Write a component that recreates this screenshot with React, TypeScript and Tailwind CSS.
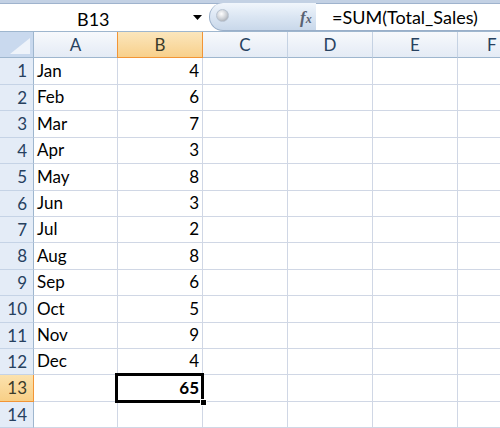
import React from "react";

const months = [
  ["Jan", 4],
  ["Feb", 6],
  ["Mar", 7],
  ["Apr", 3],
  ["May", 8],
  ["Jun", 3],
  ["Jul", 2],
  ["Aug", 8],
  ["Sep", 6],
  ["Oct", 5],
  ["Nov", 9],
  ["Dec", 4],
] as const;

const heights = [
  "h-[27px]",
  "h-[26px]",
  "h-[27px]",
  "h-[26px]",
  "h-[27px]",
  "h-[26px]",
  "h-[26px]",
  "h-[27px]",
  "h-[26px]",
  "h-[27px]",
  "h-[26px]",
  "h-[26px]",
];

const font = { fontFamily: "Lato, 'Open Sans', sans-serif" };

function RowHeader({ n, selected }: { n: number; selected?: boolean }) {
  return (
    <div
      className={
        "w-[34px] shrink-0 h-full flex items-center justify-end pr-[6px] border-r border-b text-[17px] " +
        (selected
          ? "bg-gradient-to-b from-[#fbe2ae] to-[#f8cf86] border-[#f29536] text-[#3b3b2a]"
          : "bg-[#e4ecf7] border-r-[#9eb6ce] border-b-[#c5d3e6] text-[#27415f]")
      }
    >
      {n}
    </div>
  );
}

function Blank() {
  return (
    <>
      <div className="w-[85px] shrink-0 h-full border-r border-b border-[#d0d7e5]" />
      <div className="w-[85px] shrink-0 h-full border-r border-b border-[#d0d7e5]" />
      <div className="w-[85px] shrink-0 h-full border-r border-b border-[#d0d7e5]" />
      <div className="flex-1 h-full border-b border-[#d0d7e5]" />
    </>
  );
}

export default function App() {
  return (
    <div
      className="w-[500px] h-[428px] overflow-hidden bg-white text-black flex flex-col"
      style={font}
    >
      {/* top strip */}
      <div className="h-[4px] shrink-0 bg-[#c3d1e4] border-b border-[#9fb3cd]" />
      {/* formula bar row */}
      <div className="h-[27px] shrink-0 flex items-stretch bg-white">
        <div className="w-[209px] shrink-0 flex items-center relative">
          <span className="absolute left-[77px] top-[2px] text-[18px] text-black">B13</span>
          <svg
            className="absolute left-[193px] top-[11px]"
            width="9"
            height="5"
            viewBox="0 0 9 5"
          >
            <polygon points="0,0 9,0 4.5,5" fill="#000" />
          </svg>
        </div>
        <div className="w-[107px] shrink-0 flex items-center relative rounded-l-full border-l border-b border-[#9aafc9] bg-gradient-to-b from-[#f1f6fc] via-[#dbe6f3] to-[#c9d8ea] -mt-[1px]">
          <div className="absolute left-[6px] top-[6px] w-[13px] h-[13px] rounded-full bg-[radial-gradient(circle_at_40%_35%,#ffffff,#c9cdd3_55%,#8e949c)] border border-[#b8c3d1]" />
          <span
            className="absolute left-[90px] top-[2px] text-[17px] text-[#596273] italic font-bold"
            style={{ fontFamily: "'Liberation Serif', serif" }}
          >
            f
            <span className="text-[12px]">x</span>
          </span>
        </div>
        <div className="flex-1 flex items-center pl-[16px] text-[18px] border-b border-[#9aafc9] bg-white">
          =SUM(Total_Sales)
        </div>
      </div>
      {/* column headers */}
      <div className="h-[27px] shrink-0 flex border-t border-[#9eb6ce]">
        <div className="w-[34px] shrink-0 h-full relative bg-[#c9d9ee] border-r border-b border-[#9eb6ce]">
          <svg className="absolute left-[10px] top-[6px]" width="20" height="16" viewBox="0 0 20 16">
            <polygon points="20,0 20,16 0,16" fill="#eef3fa" />
          </svg>
        </div>
        <div className="w-[84px] shrink-0 h-full flex items-center justify-center text-[17px] text-[#27415f] bg-gradient-to-b from-[#f7f9fc] to-[#e4ebf5] border-r border-[#c5d2e3] border-b border-b-[#9eb6ce]">
          A
        </div>
        <div className="w-[86px] -ml-[1px] shrink-0 h-full flex items-center justify-center text-[17px] text-[#3b3b2a] bg-gradient-to-b from-[#fbe6bc] to-[#f8d08b] border-l border-r border-b border-[#f29536]">
          B
        </div>
        <div className="w-[85px] shrink-0 h-full flex items-center justify-center text-[17px] text-[#27415f] bg-gradient-to-b from-[#f7f9fc] to-[#e4ebf5] border-r border-[#c5d2e3] border-b border-b-[#9eb6ce]">
          C
        </div>
        <div className="w-[85px] shrink-0 h-full flex items-center justify-center text-[17px] text-[#27415f] bg-gradient-to-b from-[#f7f9fc] to-[#e4ebf5] border-r border-[#c5d2e3] border-b border-b-[#9eb6ce]">
          D
        </div>
        <div className="w-[85px] shrink-0 h-full flex items-center justify-center text-[17px] text-[#27415f] bg-gradient-to-b from-[#f7f9fc] to-[#e4ebf5] border-r border-[#c5d2e3] border-b border-b-[#9eb6ce]">
          E
        </div>
        <div className="flex-1 h-full flex items-center pl-[29px] text-[17px] text-[#27415f] bg-gradient-to-b from-[#f7f9fc] to-[#e4ebf5] border-b border-[#9eb6ce]">
          F
        </div>
      </div>
      {/* data rows */}
      {months.map(([m, v], i) => (
        <div key={m} className={"flex shrink-0 " + heights[i]}>
          <RowHeader n={i + 1} />
          <div className="w-[84px] shrink-0 h-full flex items-end pb-[1px] pl-[3px] text-[17px] border-r border-b border-[#d0d7e5]">
            {m}
          </div>
          <div className="w-[85px] shrink-0 h-full flex items-end justify-end pb-[1px] pr-[3px] text-[17px] border-r border-b border-[#d0d7e5]">
            {v}
          </div>
          <Blank />
        </div>
      ))}
      {/* row 13 */}
      <div className="flex shrink-0 h-[27px]">
        <RowHeader n={13} selected />
        <div className="w-[84px] shrink-0 h-full border-r border-b border-[#d0d7e5]" />
        <div className="w-[85px] shrink-0 h-full relative flex items-end justify-end pb-[1px] pr-[3px] text-[17px] font-bold border-r border-b border-[#d0d7e5]">
          65
          <div className="absolute -left-[3px] -top-[2px] -right-[2px] -bottom-[2px] border-[3px] border-black" />
          <div className="absolute -right-[5px] -bottom-[5px] w-[7px] h-[7px] bg-black border border-white" />
        </div>
        <Blank />
      </div>
      {/* row 14 */}
      <div className="flex shrink-0 h-[26px]">
        <RowHeader n={14} />
        <div className="w-[84px] shrink-0 h-full border-r border-b border-[#d0d7e5]" />
        <div className="w-[85px] shrink-0 h-full border-r border-b border-[#d0d7e5]" />
        <Blank />
      </div>
    </div>
  );
}
